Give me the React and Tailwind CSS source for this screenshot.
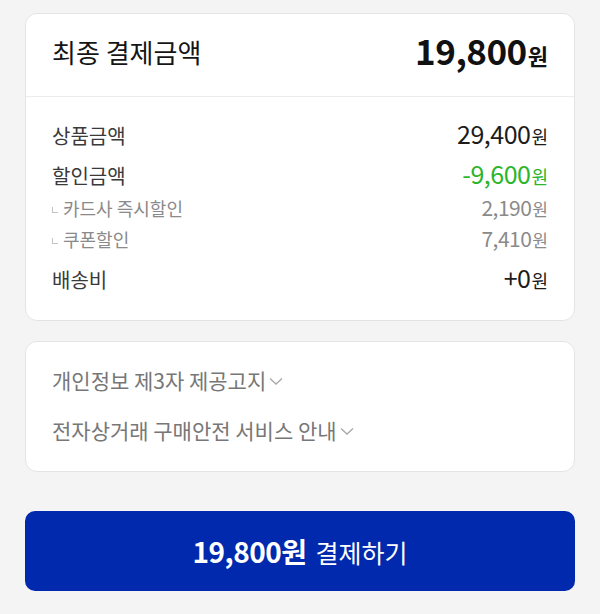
import React from "react";

const F = { fontFamily: '"Noto Sans CJK KR", "Noto Sans", sans-serif' };

function Chevron() {
  return (
    <svg width="14" height="9" viewBox="0 0 14 9" className="ml-[3px] mt-[2px]">
      <path d="M1 1.5 L7 7 L13 1.5" fill="none" stroke="#a8a8a8" strokeWidth="1.3" />
    </svg>
  );
}

function Row({ label, value, valueCls, h }) {
  return (
    <div className={`flex items-center justify-between ${h}`}>
      <span className="mt-[5px] text-[20px] text-[#3a3a3a] leading-none">{label}</span>
      <span className={`flex items-baseline leading-none ${valueCls}`}>
        <span className="text-[25px] tracking-[-0.5px]">{value}</span>
        <span className="ml-[1px] text-[18px]">원</span>
      </span>
    </div>
  );
}

function SubRow({ label, value, h }) {
  return (
    <div className={`flex items-center justify-between ${h}`}>
      <span className="mt-[2px] flex items-center leading-none">
        <span className="mr-[5px] mt-[4px] block h-[6px] w-[6px] border-b border-l border-[#c4c4c4]"></span>
        <span className="text-[18px] text-[#8a8a8a]">{label}</span>
      </span>
      <span className="flex items-baseline leading-none text-[#8a8a8a]">
        <span className="text-[21px] tracking-[-0.5px]">{value}</span>
        <span className="ml-[1px] text-[17px]">원</span>
      </span>
    </div>
  );
}

export default function App() {
  return (
    <div style={F} className="min-h-[614px] w-[600px] bg-[#f4f4f4] px-[25px] pt-[13px]">
      <div className="rounded-[12px] border border-[#e4e4e4] bg-white">
        <div className="flex h-[83px] items-center justify-between border-b border-[#ececec] px-[26px] pb-[6px]">
          <span className="text-[26px] leading-none text-[#151515]">최종 결제금액</span>
          <span className="mb-[5px] flex items-baseline font-bold leading-none text-[#111]">
            <span className="text-[35px] tracking-[-0.5px]">19,800</span>
            <span className="ml-[1px] text-[22px]">원</span>
          </span>
        </div>
        <div className="px-[26px] pb-[21px] pt-[16px]">
          <Row label="상품금액" value="29,400" valueCls="text-[#1c1c1c]" h="h-[40px]" />
          <Row label="할인금액" value="-9,600" valueCls="text-[#2bb52b]" h="h-[40px]" />
          <SubRow label="카드사 즉시할인" value="2,190" h="h-[28px]" />
          <SubRow label="쿠폰할인" value="7,410" h="h-[34px]" />
          <Row label="배송비" value="+0" valueCls="text-[#1c1c1c]" h="h-[44px]" />
        </div>
      </div>

      <div className="mt-[20px] rounded-[12px] border border-[#e4e4e4] bg-white px-[26px] pb-[16px] pt-[13px]">
        <div className="flex h-[50px] items-center">
          <span className="text-[21px] leading-none text-[#777]">개인정보 제3자 제공고지</span>
          <Chevron />
        </div>
        <div className="flex h-[50px] items-center">
          <span className="text-[21px] leading-none text-[#777]">전자상거래 구매안전 서비스 안내</span>
          <Chevron />
        </div>
      </div>

      <button className="mt-[39px] flex h-[80px] w-full items-center justify-center rounded-[10px] bg-[#0029ad] text-white">
        <span className="flex items-baseline leading-none">
          <span className="text-[28px] font-bold tracking-[-0.5px]">19,800원</span>
          <span className="ml-[9px] text-[25px]">결제하기</span>
        </span>
      </button>
    </div>
  );
}
